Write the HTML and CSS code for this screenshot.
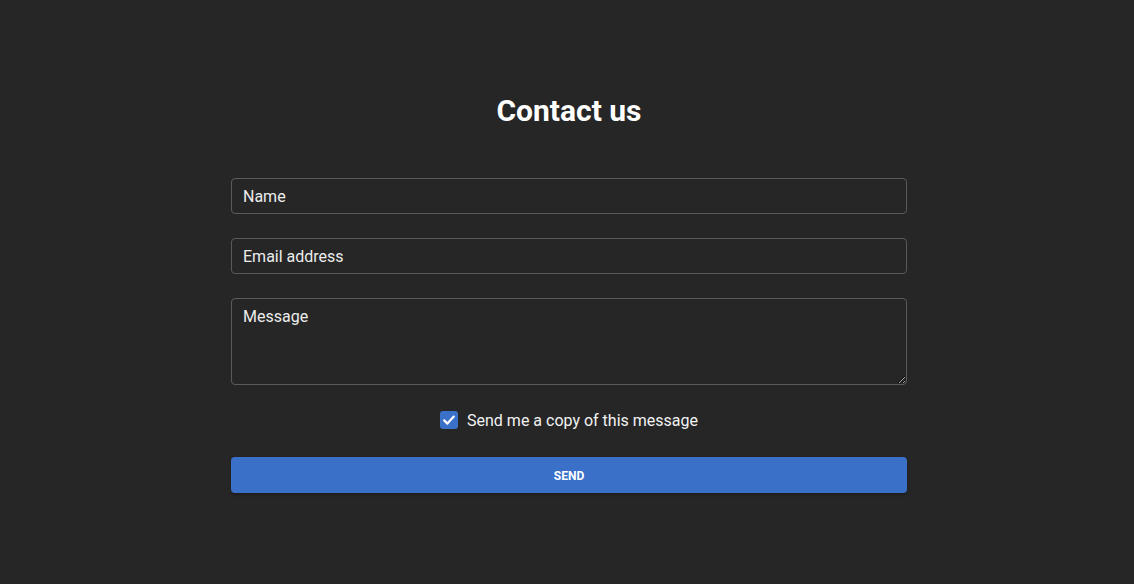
FILE: index.html
```html
<!DOCTYPE html>
<html lang="en">
<head>
<meta charset="utf-8">
<title>Contact us</title>
<link rel="stylesheet" href="styles.css">
</head>
<body>
<main class="page">
  <form class="contact">
    <h1 class="title">Contact us</h1>
    <input class="field" type="text" placeholder="Name">
    <input class="field" type="email" placeholder="Email address">
    <textarea class="field area" placeholder="Message"></textarea>
    <label class="copy">
      <span class="box"><svg viewBox="0 0 18 18" width="18" height="18"><path d="M4.2 9.4l3.2 3.2 6.4-7" fill="none" stroke="#fff" stroke-width="2.2" stroke-linecap="round" stroke-linejoin="round"/></svg></span>
      <span class="copy-text">Send me a copy of this message</span>
    </label>
    <button class="send" type="button">SEND</button>
  </form>
</main>
</body>
</html>
```

FILE: styles.css
```css
html, body {
  margin: 0;
  padding: 0;
  background: #262626;
  height: 100%;
}
body {
  font-family: Roboto, "Liberation Sans", Arial, sans-serif;
  color: #f2f2f2;
}
.page {
  display: flex;
  justify-content: center;
  padding-left: 4px;
  padding-top: 93px;
}
.contact {
  width: 676px;
  display: flex;
  flex-direction: column;
}
.title {
  margin: 0 0 49px;
  text-align: center;
  font-size: 30px;
  line-height: 36px;
  font-weight: 700;
  color: #ffffff;
}
.field {
  box-sizing: border-box;
  width: 100%;
  height: 36px;
  margin: 0 0 24px;
  padding: 0 11px;
  background: #262626;
  border: 1px solid #5a5a5a;
  border-radius: 4px;
  font-family: Roboto, "Liberation Sans", Arial, sans-serif;
  font-size: 16px;
  color: #eeeeee;
  outline: none;
}
.field::placeholder {
  color: #ececec;
  opacity: 1;
}
.area {
  height: 87px;
  padding: 8px 11px;
  line-height: 20px;
  resize: vertical;
  margin-bottom: 24px;
}
.copy {
  display: flex;
  justify-content: center;
  align-items: center;
  gap: 9px;
  height: 20px;
  margin: 1px 0 27px;
  font-size: 16px;
  color: #f2f2f2;
}
.box {
  width: 18px;
  height: 18px;
  border-radius: 3px;
  background: #3b70c9;
  display: flex;
}
.send {
  height: 36px;
  padding-top: 2px;
  border: none;
  border-radius: 4px;
  background: #3b70c9;
  color: #ffffff;
  font-family: Roboto, "Liberation Sans", Arial, sans-serif;
  font-size: 12px;
  font-weight: 700;
  box-shadow: 0 2px 3px rgba(0,0,0,0.25);
}
```
